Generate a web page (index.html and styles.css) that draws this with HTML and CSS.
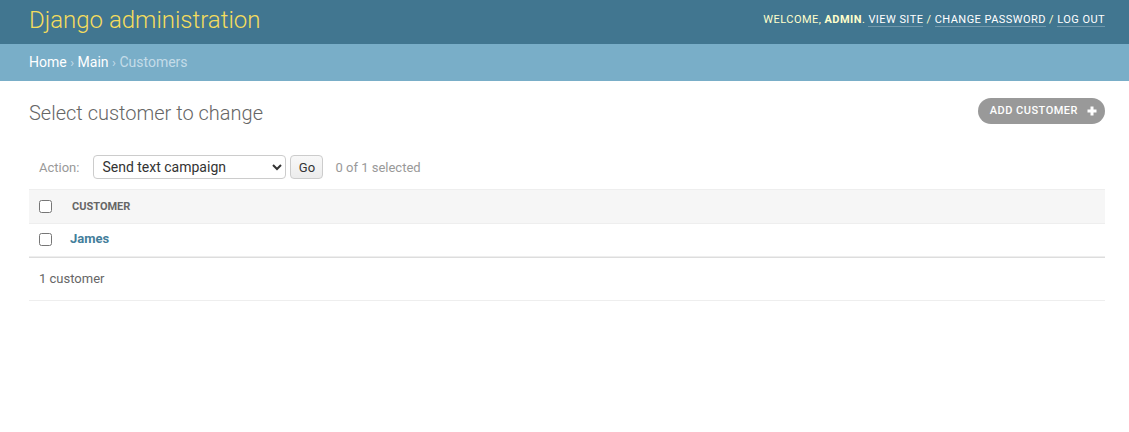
FILE: index.html
```html
<!DOCTYPE html>
<html lang="en">
<head>
<meta charset="utf-8">
<title>Select customer to change | Django site admin</title>
<link rel="stylesheet" href="styles.css">
</head>
<body>
<header class="header">
  <div class="branding">Django administration</div>
  <div class="user-tools">
    Welcome, <strong>admin</strong>.
    <a href="#">View site</a> /
    <a href="#">Change password</a> /
    <a href="#">Log out</a>
  </div>
</header>
<nav class="breadcrumbs">
  <a href="#">Home</a> <span class="sep">›</span> <a href="#">Main</a> <span class="sep">›</span> Customers
</nav>
<main class="content">
  <div class="title-row">
    <h1 class="title">Select customer to change</h1>
    <a href="#" class="addlink">Add customer
      <svg class="plus" width="10" height="10" viewBox="0 0 10 10"><path d="M5 0.5v9M0.5 5h9" stroke="#fff" stroke-width="3"/></svg>
    </a>
  </div>
  <div class="actions">
    <label class="action-label">Action:</label>
    <select class="action-select">
      <option>Send text campaign</option>
    </select>
    <button class="go" type="button">Go</button>
    <span class="counter">0 of 1 selected</span>
  </div>
  <table class="results">
    <thead>
      <tr>
        <th class="cb-col"><input type="checkbox" class="cb"></th>
        <th class="col-head">Customer</th>
      </tr>
    </thead>
    <tbody>
      <tr>
        <td class="cb-col"><input type="checkbox" class="cb"></td>
        <th class="row-link"><a href="#">James</a></th>
      </tr>
    </tbody>
  </table>
  <p class="paginator">1 customer</p>
</main>
</body>
</html>
```

FILE: styles.css
```css
html, body {
  margin: 0;
  padding: 0;
}
body {
  font-family: Roboto, "Liberation Sans", Arial, sans-serif;
  font-size: 14px;
  color: #333;
  background: #fff;
}
a {
  text-decoration: none;
}
.header {
  background: #417690;
  color: #ffc;
  height: 44px;
  box-sizing: border-box;
  padding: 0 24px 0 29px;
  display: flex;
  justify-content: space-between;
  align-items: center;
}
.branding {
  font-size: 24px;
  font-weight: 300;
  color: #f5dd5d;
  line-height: 28px;
  margin-top: -4px;
}
.user-tools {
  font-size: 11px;
  font-weight: 400;
  letter-spacing: 0.45px;
  text-transform: uppercase;
  line-height: 14px;
  margin-top: -4px;
}
.user-tools strong {
  font-weight: 700;
}
.user-tools a {
  color: #fff;
  border-bottom: 1px solid rgba(255, 255, 255, 0.25);
}
.breadcrumbs {
  background: #79aec8;
  color: #c4dce8;
  font-size: 14px;
  line-height: 17px;
  height: 17px;
  overflow: hidden;
  padding: 10px 24px 10px 29px;
}
.breadcrumbs a {
  color: #fff;
}
.breadcrumbs .sep {
  font-size: 13px;
  line-height: 17px;
  color: #c4dce8;
}
.content {
  padding: 20px 24px 0 29px;
}
.title-row {
  display: flex;
  justify-content: space-between;
  align-items: center;
  height: 24px;
  margin-bottom: 20px;
}
.title {
  margin: 0;
  font-size: 20px;
  font-weight: 300;
  color: #666;
  line-height: 24px;
}
.addlink {
  display: flex;
  align-items: center;
  background: #999;
  color: #fff;
  font-size: 11px;
  font-weight: 500;
  letter-spacing: 0.5px;
  text-transform: uppercase;
  border-radius: 15px;
  height: 26px;
  box-sizing: border-box;
  padding: 0 8px 0 12px;
  margin-top: -5px;
}
.plus {
  margin-left: 9px;
}
.actions {
  display: flex;
  align-items: center;
  padding: 10px;
  height: 24px;
  color: #999;
  font-size: 13px;
}
.action-label {
  margin-right: 14px;
}
.action-select {
  width: 193px;
  height: 24px;
  border: 1px solid #ccc;
  border-radius: 4px;
  font-family: Roboto, "Liberation Sans", Arial, sans-serif;
  font-size: 14px;
  color: #333;
  background: #fff;
  padding: 0 4px;
}
.go {
  margin-left: 4px;
  width: 33px;
  height: 24px;
  border: 1px solid #ccc;
  border-radius: 4px;
  background: linear-gradient(#f8f8f8, #ececec);
  font-family: Roboto, "Liberation Sans", Arial, sans-serif;
  font-size: 13px;
  color: #333;
  padding: 0;
}
.counter {
  margin-left: 12px;
}
.results {
  width: 100%;
  border-collapse: collapse;
}
.results th,
.results td {
  text-align: left;
  padding: 0;
  height: 34px;
  box-sizing: border-box;
  vertical-align: middle;
}
.results thead th {
  background: #f6f6f6;
  border-top: 1px solid #eee;
  border-bottom: 1px solid #eee;
}
.cb-col {
  width: 33px;
  padding-left: 10px !important;
}
.cb {
  margin: 0;
  width: 13px;
  height: 13px;
  display: block;
}
.col-head {
  font-size: 11px;
  font-weight: 700;
  color: #666;
  text-transform: uppercase;
  padding-left: 10px !important;
}
.results tbody td,
.results tbody th {
  height: 33px;
  border-bottom: 1px solid #eee;
  vertical-align: top;
  padding-top: 7px;
  line-height: 16px;
}
.results tbody .cb {
  margin-top: 2px;
}
.row-link {
  font-size: 13px;
  padding-left: 8px !important;
}
.row-link a {
  color: #447e9b;
  font-weight: 700;
}
.paginator {
  margin: 0;
  border-top: 1px solid #ddd;
  border-bottom: 1px solid #eee;
  padding: 10px;
  line-height: 22px;
  font-size: 13px;
  color: #666;
}
```
